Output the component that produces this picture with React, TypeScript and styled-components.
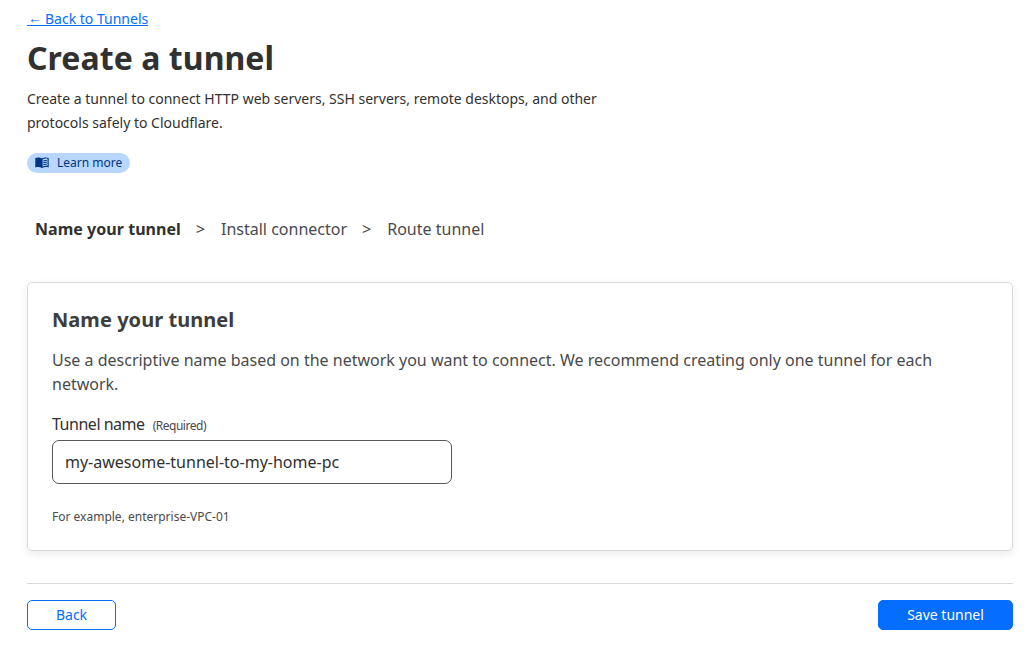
import React from 'react';
import styled, { createGlobalStyle } from 'styled-components';

const Global = createGlobalStyle`
  *, *::before, *::after { box-sizing: border-box; }
  body {
    margin: 0; background: #fff; color: #313131;
    font-family: "Noto Sans", sans-serif; font-size: 14px;
  }
`;
const Page = styled.main`
  display: flex; flex-direction: column; align-items: flex-start;
  padding: 8px 18px 0 27px;
`;
const BackLink = styled.a`
  display: flex; height: 18px; margin-bottom: 3px; border-bottom: 1px solid #056dff;
  color: #056dff; font-size: 14px; line-height: 21px;
`;
const Arrow = styled.span`
  margin: -1px 3px 0 1px;
`;
const Title = styled.h1`
  margin: 9px 0 0; font-size: 32px; line-height: 40px; font-weight: 700; letter-spacing: 0.06px;
`;
const Intro = styled.p`
  margin: 9px 0 0; width: 600px; font-size: 14px; line-height: 24px;
`;
const LearnMore = styled.a`
  display: flex; align-items: center; gap: 8px; height: 20px; margin-top: 18px; padding: 0 8px;
  border-radius: 10px; background: #b9d6ff; color: #003681; font-size: 12px; line-height: 20px;
`;
const Steps = styled.nav`
  display: flex; margin: 44px 0 0 8px; font-size: 16px; line-height: 24px; color: #4a4a4a;
`;
const Step = styled.span<{ $active?: boolean }>`
  font-weight: ${p => (p.$active ? 700 : 400)};
  color: ${p => (p.$active ? '#313131' : '#4a4a4a')};
  letter-spacing: ${p => (p.$active ? '0.04px' : 'normal')};
`;
const Separator = styled.span`
  margin: 0 16px 0 15px;
`;
const Card = styled.section`
  align-self: stretch; height: 269px; margin-top: 41px; padding: 24px;
  border: 1px solid #d9d9d9; border-radius: 5px; box-shadow: 0 3px 8px rgba(0, 0, 0, 0.08);
`;
const CardTitle = styled.h2`
  margin: 0; font-size: 20px; line-height: 26px; font-weight: 700; color: #3d3d3d; letter-spacing: 0.05px;
`;
const CardText = styled.p`
  margin: 15px 0 0; font-size: 16px; line-height: 24px; color: #4a4a4a;
`;
const Label = styled.label`
  display: flex; align-items: baseline; gap: 8px; height: 24px; margin-top: 16px;
  font-size: 16px; line-height: 24px; letter-spacing: -0.48px;
`;
const Required = styled.span`
  font-size: 12px; color: #4a4a4a;
`;
const Input = styled.input`
  display: block; width: 400px; height: 44px; margin-top: 4px; padding: 0 12px;
  border: 1px solid #595959; border-radius: 7px; background: #fff; color: #313131;
  font: 16px "Noto Sans", sans-serif; outline: none;
`;
const Hint = styled.p`
  margin: 24px 0 0; font-size: 12px; line-height: 18px; color: #4a4a4a;
`;
const Footer = styled.footer`
  display: flex; justify-content: space-between; align-self: stretch;
  margin-top: 32px; padding-top: 16px; border-top: 1px solid #d9d9d9;
`;
const Button = styled.button<{ $primary?: boolean }>`
  width: ${p => (p.$primary ? 135 : 89)}px; height: 30px; padding: 0 0 2px; border-radius: 5px;
  border: 1px solid #056dff;
  background: ${p => (p.$primary ? '#056dff' : '#fff')};
  color: ${p => (p.$primary ? '#fff' : '#056dff')};
  font: 14px "Noto Sans", sans-serif;
`;

const BookIcon = () => (
  <svg width="14" height="14" viewBox="0 0 14 14">
    <path
      fill="#003681"
      d="M7 2.400C5.900 1.600 4.300 1.400 3.200 1.400 2.200 1.400 1.200 1.600.3 2.100V11.500C1.200 11.100 2.200 11 3.200 11 4.600 11 5.900 11.300 7 12 8.100 11.300 9.400 11 10.800 11 11.800 11 12.800 11.100 13.700 11.500V2.100C12.800 1.600 11.800 1.400 10.800 1.400 9.700 1.400 8.100 1.600 7 2.400Z"
    />
    <path
      fill="#b9d6ff"
      d="M7.600 3.500C8.500 2.800 9.700 2.500 10.800 2.500 11.500 2.500 12 2.600 12.500 2.800V10C12 9.800 11.500 9.800 10.800 9.800 9.600 9.800 8.500 10.100 7.600 10.600Z"
    />
    <path
      fill="none"
      stroke="#003681"
      strokeWidth="1.050"
      d="M8.300 4.900c1.100-.5 2.100-.6 3.500-.4M8.300 6.800c1.100-.5 2.100-.6 3.500-.4M8.300 8.700c1.100-.5 2.100-.6 3.500-.4"
    />
  </svg>
);

export default function App() {
  return (
    <Page>
      <Global />
      <BackLink>
        <Arrow>←</Arrow>
        <span>Back to Tunnels</span>
      </BackLink>
      <Title>Create a tunnel</Title>
      <Intro>
        Create a tunnel to connect HTTP web servers, SSH servers, remote desktops, and other protocols safely to
        Cloudflare.
      </Intro>
      <LearnMore>
        <BookIcon />
        Learn more
      </LearnMore>
      <Steps>
        <Step $active>Name your tunnel</Step>
        <Separator>&gt;</Separator>
        <Step>Install connector</Step>
        <Separator>&gt;</Separator>
        <Step>Route tunnel</Step>
      </Steps>
      <Card>
        <CardTitle>Name your tunnel</CardTitle>
        <CardText>
          Use a descriptive name based on the network you want to connect. We recommend creating only one tunnel for
          each network.
        </CardText>
        <Label htmlFor="name">
          Tunnel name <Required>(Required)</Required>
        </Label>
        <Input id="name" defaultValue="my-awesome-tunnel-to-my-home-pc" />
        <Hint>For example, enterprise-VPC-01</Hint>
      </Card>
      <Footer>
        <Button>Back</Button>
        <Button $primary>Save tunnel</Button>
      </Footer>
    </Page>
  );
}
